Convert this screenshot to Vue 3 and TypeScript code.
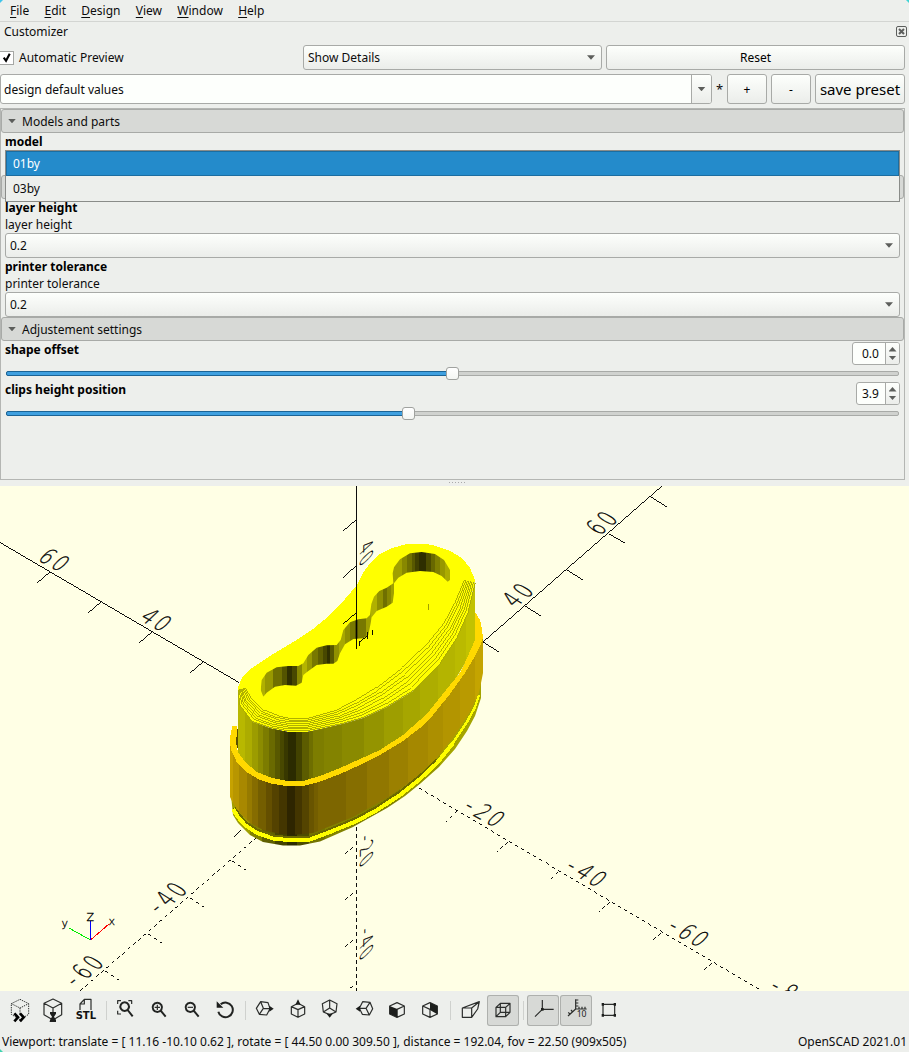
<script setup lang="ts">
import { ref } from 'vue'

interface Icon {
  cx: number
  line?: string
  fill?: string
  heavy?: string
  dashed?: boolean
  label?: { x: number; y: number; size: number; bold: boolean; text: string }
  pressed?: boolean
}

const menus = ['File', 'Edit', 'Design', 'View', 'Window', 'Help']
const options = ['01by', '03by']
const selected = ref('01by')

const sliders = [
  { name: 'shape offset', value: '0.0', percent: 50, wide: true },
  { name: 'clips height position', value: '3.9', percent: 45.1, wide: false },
]

const groups: Icon[][] = [
  [
    { cx: 60, dashed: true, line: 'M60 28L86 41V73L60 89L34 73V41ZM34 41L60 54L86 41M60 54V72', heavy: 'M43 70L54 82L43 94M60 70L71 82L60 94' },
    { cx: 159, line: 'M159 27L185 40V74L159 90L132 74V40ZM132 40L159 54L185 40M159 54V68M149 94H168', fill: 'M150 66H168V71L162 80L168 90V95H150V90L156 80L150 71Z' },
    { cx: 259, line: 'M241 60V42L254 28H274V60M254 28V42H241', label: { x: 228, y: 88, size: 30, bold: true, text: 'STL' } },
  ],
  [
    { cx: 378, line: 'M353 42V32H363M385 32H395V42M353 62V72H363', heavy: 'M374 37A13 13 0 1 1 373.9 37M383 60L398 79' },
    { cx: 477, line: 'M464 52H480M472 44V60', heavy: 'M472 38A14 14 0 1 1 471.9 38M482 62L497 80' },
    { cx: 576, line: 'M563 52H579', heavy: 'M571 38A14 14 0 1 1 570.9 38M581 62L596 80' },
    { cx: 674, heavy: 'M661 43A22 22 0 1 1 654 65', fill: 'M649 34V53H669Z' },
  ],
  [
    { cx: 795, line: 'M782 35L804 38L810 56L800 75L778 73L769 55ZM782 35L790 55L810 56M790 55L778 73', fill: 'M808 47L821 56L808 65Z' },
    { cx: 894, line: 'M894 40L914 50V72L894 82L874 72V50ZM874 50L894 59L914 50M894 59V82', fill: 'M894 28L902 44H886Z' },
    { cx: 992, line: 'M988 30L1010 41L1007 66L988 74L969 66L966 41ZM988 30V54L969 66M988 54L1007 66', fill: 'M988 83L979 71H997Z' },
    { cx: 1092, line: 'M1110 37L1118 56L1108 75L1087 73L1078 55L1088 35ZM1110 37L1098 55L1078 55M1098 55L1108 75', fill: 'M1067 56L1080 47V65Z' },
    { cx: 1191, line: 'M1191 38L1213 48V72L1191 82L1169 72V48ZM1191 58L1213 48M1191 58V82', fill: 'M1169 48L1192 57V82L1169 72Z' },
    { cx: 1290, line: 'M1290 38L1312 48V72L1290 82L1268 72V48ZM1268 48L1290 58V82', fill: 'M1290 38L1312 48V73L1290 60Z' },
  ],
  [
    { cx: 1410, line: 'M1387 54H1415V82H1387ZM1387 54L1438 35L1415 54M1438 35L1433 57L1415 82' },
    { cx: 1509, pressed: true, line: 'M1488 52H1517V80H1488ZM1501 40H1530V67H1501ZM1488 52L1501 40M1517 52L1530 40M1488 80L1501 67M1517 80L1530 67' },
  ],
  [
    { cx: 1629, pressed: true, line: 'M1627 30V58H1661M1627 58L1605 80', fill: 'M1623 54H1631V62H1623Z' },
    { cx: 1728, pressed: true, line: 'M1727 28V57H1760M1727 30H1735M1727 39H1735M1727 48H1735M1737 50V57M1746 50V57M1755 50V57M1727 57L1704 78M1713 60L1718 66M1705 67L1711 74', label: { x: 1730, y: 82, size: 26, bold: false, text: '10' } },
    { cx: 1827, line: 'M1809 43H1844V76H1809Z', fill: 'M1805 39H1812V47H1805ZM1841 39H1848V47H1841ZM1805 72H1812V80H1805ZM1841 72H1848V80H1841Z' },
  ],
]

type Band = [number, number, string]
const bodyBands: Band[] = [
  [238, 245, '#b8b800'], [245, 252, '#acac00'], [252, 258, '#9c9c00'], [258, 263, '#8c8c00'], [263, 269, '#7c7c00'],
  [269, 275, '#6a6a00'], [275, 280, '#585800'], [280, 284, '#484800'], [284, 288, '#383800'], [288, 296, '#2b2b00'],
  [296, 302, '#424200'], [302, 309, '#5c5c00'], [309, 313, '#6e6e00'], [313, 324, '#7d7d00'], [324, 342, '#838300'],
  [342, 364, '#8a8a00'], [364, 384, '#949400'], [384, 403, '#9e9e00'], [403, 420, '#a6a600'], [420, 438, '#adad00'],
  [438, 455, '#b4b400'], [455, 466, '#baba00'], [466, 476, '#c2c200'],
]
const ringBands: Band[] = [
  [230, 233, '#c6a200'], [233, 239, '#b89600'], [239, 247, '#a88800'], [247, 252, '#967a00'], [252, 258, '#866c00'],
  [258, 266, '#745e00'], [266, 272, '#644f00'], [272, 279, '#544200'], [279, 287, '#443600'], [287, 295, '#2e2500'],
  [295, 302, '#433500'], [302, 309, '#544400'], [309, 314, '#685400'], [314, 318, '#745e00'], [318, 346, '#7d6600'],
  [346, 367, '#866e00'], [367, 389, '#917700'], [389, 408, '#9b8000'], [408, 428, '#a58800'], [428, 443, '#ac8f00'],
  [443, 460, '#b39500'], [460, 475, '#b99a00'], [475, 483, '#c4a400'],
]
const baseBands: Band[] = [
  [230, 250, '#a0a000'], [250, 262, '#808000'], [262, 275, '#606000'], [275, 287, '#444400'], [287, 297, '#2c2c00'],
  [297, 309, '#4c4c00'], [309, 325, '#747400'], [325, 400, '#828200'], [400, 440, '#949400'], [440, 483, '#a4a400'],
]
const holeBands: Band[] = [
  [120, 135, '#b0b000'], [135, 160, '#989800'], [160, 185, '#707000'], [185, 200, '#545400'], [200, 215, '#303000'],
  [215, 232, '#484800'], [232, 245, '#888800'], [245, 262, '#b4b400'], [262, 275, '#989800'], [275, 295, '#787800'],
  [295, 310, '#606000'], [310, 320, '#484800'], [320, 330, '#303000'], [330, 342, '#585800'], [342, 357, '#909000'],
  [357, 375, '#a8a800'], [375, 390, '#909000'], [390, 405, '#787800'], [405, 415, '#505000'], [415, 438, '#787800'],
  [438, 452, '#a0a000'], [452, 470, '#b0b000'], [470, 490, '#909000'], [490, 502, '#707000'], [502, 512, '#888800'],
  [512, 545, '#a0a000'], [545, 560, '#888800'], [560, 575, '#707000'], [575, 585, '#585800'], [585, 597, '#404000'],
  [597, 618, '#2e2e00'], [618, 632, '#4c4c00'], [632, 645, '#686800'], [645, 660, '#808000'], [660, 675, '#989800'],
  [675, 692, '#acac00'],
]

// Rounded rim: outer and inner edge points, stepped into layer lines.
const rim: [number, number, number, number][] = [
  [238, 690, 246, 688], [240, 705, 253, 698], [253, 722, 265, 709], [270, 728, 280, 715], [287, 731, 290, 717],
  [308, 731, 308, 717], [342, 724, 335, 709], [363, 718, 353, 699], [387, 707, 375, 685], [413, 691, 400, 665],
  [440, 663, 425, 642], [457, 637, 442, 622], [468, 612, 453, 602], [475, 583, 463, 580],
]
const layers = Array.from({ length: 8 }, (_, i) => {
  const t = i / 8
  return 'M' + rim.map(([ox, oy, ix, iy]) => `${(ox + (ix - ox) * t).toFixed(1)} ${(oy + (iy - oy) * t - 0.5).toFixed(1)}`).join('L')
})

const alongY = 'matrix(1.6 .88 -1.78 1.68 '
const alongX = 'matrix(1.38 -1.14 2.2 1.37 '
const alongZ = 'matrix(0 1.41 -1.74 1.6 '
const marks = [
  { at: alongY + '36.5 559.5)', text: '60' },
  { at: alongY + '138.5 619.5)', text: '40' },
  { at: alongY + '459 808)', text: '-20' },
  { at: alongY + '561 868)', text: '-40' },
  { at: alongY + '663 928)', text: '-60' },
  { at: alongY + '765 988)', text: '-80' },
  { at: alongX + '515.5 608)', text: '40' },
  { at: alongX + '599.5 536)', text: '60' },
  { at: alongX + '158 916)', text: '-40' },
  { at: alongX + '74.5 989)', text: '-60' },
  { at: alongZ + '360 548)', text: '40' },
  { at: alongZ + '360 838)', text: '-20' },
  { at: alongZ + '360 931)', text: '-40' },
]
const spread = (t: string) => (t.length === 3 ? '1.5 7.95 15.9' : '0 7.95')
</script>

<template>
  <div class="window">
    <i class="corner tl"></i><i class="corner tr"></i><i class="corner bl"></i>
    <nav class="menubar">
      <span v-for="m in menus" :key="m" class="menu"><u>{{ m[0] }}</u>{{ m.slice(1) }}</span>
    </nav>

    <div class="dock-title">
      <span>Customizer</span>
      <svg class="close" viewBox="0 0 11 11"><rect x=".5" y=".5" width="10" height="10" rx="1.5" /><path d="M3 3L8 8M8 3L3 8" /></svg>
    </div>

    <div class="row first">
      <label class="check"><span class="box"><svg viewBox="0 0 13 13"><path d="M3.5 6L6 9.5L10 2" /></svg></span>Automatic Preview</label>
      <div class="combo details">Show Details<b class="down"></b></div>
      <button class="btn reset">Reset</button>
    </div>

    <div class="row second">
      <div class="edit"><span>design default values</span><em><b class="down"></b></em></div>
      <span class="star">*</span>
      <button class="btn sq">+</button>
      <button class="btn sq">-</button>
      <button class="btn save">save preset</button>
    </div>

    <section class="panel">
      <div class="head"><b class="down"></b>Models and parts</div>
      <div class="name">model</div>
      <div class="anchor">
        <div class="combo"></div>
        <ul class="popup">
          <li v-for="o in options" :key="o" :class="{ on: o === selected }" @click="selected = o">{{ o }}</li>
        </ul>
      </div>
      <div class="head"></div>
      <div class="name">layer height</div>
      <div class="desc">layer height</div>
      <div class="combo field">0.2<b class="down"></b></div>
      <div class="name">printer tolerance</div>
      <div class="desc">printer tolerance</div>
      <div class="combo field">0.2<b class="down"></b></div>
      <div class="head"><b class="down"></b>Adjustement settings</div>
      <div v-for="s in sliders" :key="s.name" class="param">
        <div class="param-top">
          <span class="name">{{ s.name }}</span>
          <span class="spin" :class="{ wide: s.wide }"><span>{{ s.value }}</span><em><b class="up"></b><b class="down"></b></em></span>
        </div>
        <div class="groove"><div class="level" :style="{ width: s.percent + '%' }"></div><div class="knob"></div></div>
      </div>
    </section>
    <div class="grip"><i v-for="n in 6" :key="n"></i></div>

    <svg class="scene" viewBox="0 486 909 505" shape-rendering="crispEdges">
      <defs>
        <clipPath id="body"><path d="M238 687L240 705L253 722L270 728L287 731.5H308L342 724L363 718L387 707L413 691L440 663L457 637L468 612L475 580V645L467 660L455 680L438 703L420 724L403 738L380 753L340 771L303 784H287L257 775L245 765L238 753Z" /></clipPath>
        <clipPath id="ring"><path d="M230 735V797L233 803L238 811L250 823L263 830L280 834L293 835L313 833L353 817L387 798L413 780L437 758L453 738L470 712L479 693L483 673V635L475 650L450 690L420 725L380 752L320 778L303 782H287L250 772L236 755Z" /></clipPath>
        <clipPath id="base"><path d="M231 795L233 815L238 823L250 835L263 842L283 845.5H300L320 841.5L353 827L387 808L405 796L421 783L439 767L455 749L467 731L475 716L481 698V680L300 780Z" /></clipPath>
        <clipPath id="hole"><path d="M690 150V120L672 90L645 72L605 66L570 70L540 88L522 112L518 130L520 160L500 173L478 183L462 200L454 222L450 255L440 265L415 268L390 277L370 300L362 330L350 345L320 346L290 353L265 375L250 400L235 408H205L170 412L140 428L125 450L122 480L130 500L140 488L165 470L195 465L228 467L245 458L250 435L262 425L290 405L320 401H340L352 393L360 370L375 343L400 327L430 325L445 315L452 280L455 262L470 243L500 230L518 218L522 190V160L535 143L560 128L600 123L640 126L665 138L683 155Z" /></clipPath>
      </defs>
      <rect y="486" width="909" height="505" fill="#ffffe5" />
      <g class="ink">
        <path d="M0 542.5L239 682.5M50 572L37 583M101 602L88 613M152 632L139 643M203 662L190 673" />
        <path d="M483 642L662 486M483 642L499 652M525 606L541 616M567 570L583 580M609 534L625 543M651 497L667 507" />
        <path d="M356 520L343 531M356 566L343 577.5M241 830L234 837" />
        <path class="dash" d="M257 837L80 991M419 788L762 991M356.5 827V991" />
        <path class="dash" d="M232 861L246 870M190 898L204 907M148 934L162 943M105 971L119 980M457 811L446 822M508 842L497 852M558 872L548 882M610 902L599 912M661 933L650 942M712 963L701 972M353 847L344 855M353 893L344 901M353 940L344 947.5M353 986L349 989" />
      </g>
      <g class="marks">
        <text v-for="m in marks" :key="m.at" :transform="m.at" :x="spread(m.text)">{{ m.text }}</text>
      </g>

      <g clip-path="url(#base)"><rect v-for="b in baseBands" :key="b[0]" :x="b[0]" y="670" :width="b[1] - b[0]" height="180" :fill="b[2]" /></g>
      <g clip-path="url(#ring)"><rect v-for="b in ringBands" :key="b[0]" :x="b[0]" y="620" :width="b[1] - b[0]" height="230" :fill="b[2]" /></g>
      <path class="lip" d="M234 808L245 822L257 830L273 836L293 838L310 837L330 829.5L357 818L377 807L400 792L420 776L437 760" />
      <path class="glow" d="M233 809L238 817L245 825L257 833L273 838.5L293 840.5L310 839.5L330 832L357 821L377 810L400 795L420 779L437 763L453 743" />
      <path class="glow thin" d="M452 744L467 722L475 707L479 695" />
      <path d="M238 727L236 737V745L240 754L246 763V727Z" fill="#5a5000" />
      <g clip-path="url(#body)"><rect v-for="b in bodyBands" :key="b[0]" :x="b[0]" y="570" :width="b[1] - b[0]" height="230" :fill="b[2]" /></g>
      <path fill="#ffd900" d="M232.5 726L230 737L230.7 749L236.7 762L246.7 772L258 779L271.7 783.7L286.7 786H303L320 781.7L340 774L360 765L380 755L403 741L420 728L433 715L450 694L465 673L475 656L481 644L483 638L482 629L480 620L475 612V640L467 658L460.7 672L450 685L438 700L430 710L420 720L403 735L380 750L360 759L340 768L320 776L303 781H287L272 778L257 772L245 762L238 752L236 743L237 731V726Z" />
      <path fill="#ffff00" d="M238 687L243 676L252 668L270 656L298 639L313 629L330 615L345 599L357 585L363 573L370 563L380 554L392 548L407 544L420 543.5L433 545L450 551L462 558L470 568L475 580L468 612L457 637L440 663L413 691L387 707L363 718L342 724L308 731.5H287L270 728L253 722L240 705Z" />
      <path v-for="(d, i) in layers" :key="i" :d="d" class="layer" />
      <g transform="translate(220 530) scale(.33333)"><g clip-path="url(#hole)"><rect v-for="b in holeBands" :key="b[0]" :x="b[0]" y="50" :width="b[1] - b[0]" height="460" :fill="b[2]" /></g></g>
      <path d="M428.5 604V610" stroke="#a0a000" />
      <path class="ink" d="M356.5 486V649M356 613L343 624M359.5 646V641L367.5 635V632M367.5 635V639M372.5 630V635" />
      <g fill="none">
        <path d="M90.5 940L109 924" stroke="#f00" /><path d="M90.5 940L69 928" stroke="#0e0" /><path d="M90.5 940V921" stroke="#00f" />
      </g>
      <g class="axis"><text x="108.5" y="925">x</text><text x="61.5" y="927">y</text><text x="86.4" y="921">Z</text></g>
    </svg>

    <div class="toolbar">
      <div v-for="(g, i) in groups" :key="i" class="group">
        <div v-for="ic in g" :key="ic.cx" class="tool" :class="{ pressed: ic.pressed }">
          <svg :viewBox="`${ic.cx - 48} 15 96 93`">
            <path v-if="ic.line" :d="ic.line" class="line" :class="{ dotted: ic.dashed }" />
            <path v-if="ic.fill" :d="ic.fill" class="fill" />
            <path v-if="ic.heavy" :d="ic.heavy" class="heavy" :class="{ extra: ic.dashed }" />
            <text v-if="ic.label" :x="ic.label.x" :y="ic.label.y" :font-size="ic.label.size" :class="{ strong: ic.label.bold }">{{ ic.label.text }}</text>
          </svg>
        </div>
      </div>
    </div>
    <footer class="status">
      <span>Viewport: translate = [ 11.16 -10.10 0.62 ], rotate = [ 44.50 0.00 309.50 ], distance = 192.04, fov = 22.50 (909x505)</span>
      <span>OpenSCAD 2021.01</span>
    </footer>
  </div>
</template>

<style>
body { margin: 0; background: #edefec; }
</style>

<style scoped>
* { box-sizing: border-box; }
.window { position: relative; width: 909px; height: 1052px; overflow: hidden; display: flex; flex-direction: column; background: #edefec; color: #0c0c0c; font: 12px/17px "Noto Sans", sans-serif; }
.corner { position: absolute; width: 3px; height: 3px; background: #3fc4ea; }
.tl { left: 0; top: 0; clip-path: polygon(0 0, 100% 0, 0 100%); }
.tr { right: 0; top: 0; background: #3fd4d4; clip-path: polygon(0 0, 100% 0, 100% 100%); }
.bl { left: 0; bottom: 0; background: #3fd4b0; clip-path: polygon(0 0, 100% 100%, 0 100%); }
.menubar { height: 22px; flex: none; display: flex; gap: 15.3px; padding: 2px 10px 0; border-bottom: 1px solid #d3d5d2; }
.menu u { text-underline-offset: 2px; text-decoration-thickness: 1px; }
.dock-title { height: 23px; flex: none; display: flex; justify-content: space-between; padding: 1px 2px 0 4px; }
.close { width: 11px; height: 11px; margin-top: 3px; fill: none; stroke: #5c5e5c; }
.close path { stroke-width: 2; }
.row { display: flex; flex: none; }
.first { height: 25px; padding-right: 4px; }
.check { width: 303px; display: flex; align-items: center; gap: 5px; }
.box { width: 14px; height: 14px; border: 1px solid #a5a7a4; border-left: 0; background: #fff; display: flex; }
.box svg { width: 13px; height: 12px; fill: none; stroke: #000; stroke-width: 2.3; }
.combo, .btn, .spin { border: 1px solid #a8aaa7; border-radius: 3px; background: linear-gradient(#fdfffc, #ebedea); }
.combo { height: 25px; padding: 0 6px 0 4px; display: flex; align-items: center; justify-content: space-between; }
.btn { font: inherit; color: #000; padding: 0; margin-left: 4px; text-align: center; }
.details { width: 299px; }
.reset { width: 299px; }
.down, .up { display: block; flex: none; width: 8px; height: 4.5px; background: #5c5e5b; clip-path: polygon(0 0, 100% 0, 50% 100%); }
.up { clip-path: polygon(50% 0, 100% 100%, 0 100%); }
.second { height: 30px; margin-top: 4px; }
.edit { width: 712px; display: flex; border: 1px solid #a8aaa7; border-radius: 3px; background: #fdfffc; justify-content: space-between; align-items: center; padding-left: 3px; }
.edit em { width: 20px; height: 28px; border-left: 1px solid #a8aaa7; background: linear-gradient(#fdfffc, #ebedea); display: grid; place-items: center; border-radius: 0 2px 2px 0; }
.star { width: 11px; padding-left: 4px; line-height: 30px; font-size: 13px; }
.sq { width: 40px; }
.row .sq:first-of-type { margin-left: 4px; }
.save { width: 90px; font-size: 15px; }
.panel { width: 905px; height: 372px; margin-top: 4px; border: 1px solid #b4b6b3; flex: none; }
.head { height: 24px; border: 1px solid #a8aaa7; border-radius: 3px; background: #d7d9d6; display: flex; align-items: center; gap: 6px; padding-left: 6px; }
.name { font-weight: 700; height: 17px; padding-left: 4px; color: #000; }
.desc { height: 17px; padding-left: 4px; }
.anchor { position: relative; margin: 0 4px; height: 25px; }
.popup { position: absolute; z-index: 2; inset: 0 0 auto; height: 52px; margin: 0; padding: 0; list-style: none; border: 1px solid #8a8c89; background: #edefec; }
.popup li { height: 25px; line-height: 25px; padding-left: 7px; }
.popup .on { background: #248bcb; color: #fff; border: 1px solid #1c6da0; padding-left: 6px; line-height: 23px; }
.field { margin: 0 4px; }
.param { height: 40px; padding: 1px 4px 0; }
.param-top { display: flex; justify-content: space-between; height: 23px; }
.param .name { padding: 0; line-height: 15px; }
.spin { width: 44px; height: 23px; display: flex; justify-content: space-between; align-items: center; background: #fdfffc; padding-left: 5px; }
.wide { width: 48px; padding-left: 9px; }
.spin em { width: 14px; height: 21px; border-left: 1px solid #a8aaa7; background: linear-gradient(#fdfffc, #ebedea); display: flex; flex-direction: column; align-items: center; justify-content: center; gap: 4px; border-radius: 0 2px 2px 0; }
.groove { height: 5px; margin: 6px 1px 0; display: flex; align-items: center; background: #d0d2cf; border: 1px solid #a8aaa7; border-radius: 2px; }
.level { height: 5px; margin-left: -1px; background: #3fa0e0; border: 1px solid #1c6496; border-radius: 2px 0 0 2px; }
.knob { width: 13px; height: 13px; flex: none; margin-left: -6px; background: linear-gradient(#fff, #f4f6f3); border: 1px solid #a0a29f; border-radius: 3px; }
.grip { height: 6px; flex: none; display: flex; justify-content: center; gap: 2px; padding-top: 2px; margin-left: 4px; }
.grip i { width: 1px; height: 1px; background: #aaa; }
.scene { width: 909px; height: 505px; flex: none; display: block; }
.ink { fill: none; stroke: #000; stroke-width: .95; }
.dash { stroke-dasharray: 3.5 3.5; }
.marks text { font: 200 10px "DejaVu Sans", sans-serif; shape-rendering: auto; stroke: #000; stroke-width: .12; }
.axis text { font: 11px "DejaVu Sans", sans-serif; font-weight: 200; stroke: #000; stroke-width: .3; }
.lip { fill: none; stroke: #6c6800; stroke-width: 3; }
.glow { fill: none; stroke: #ff0; stroke-width: 4; }
.thin { stroke-width: 2.5; }
.layer { fill: none; stroke: #a8a800; stroke-width: .9; }
.toolbar { height: 40px; flex: none; display: flex; padding: 4px 0 0 4px; }
.group { display: flex; gap: 1px; height: 31px; }
.group + .group { padding-left: 3px; margin-left: 4px; border-left: 1px solid transparent; border-image: linear-gradient(transparent 20%, #cfd1ce 20%, #cfd1ce 80%, transparent 80%) 1; }
.tool { width: 32px; height: 31px; border-radius: 3px; }
.tool svg { display: block; width: 32px; height: 31px; }
.pressed { background: #d7d9d6; box-shadow: inset 0 0 0 1px #aeb0ad; }
.line { fill: none; stroke: #2c2e2c; stroke-width: 3.6; stroke-linejoin: round; }
.dotted { stroke-dasharray: 4 3; stroke-width: 3; }
.fill { fill: #1c1e1c; }
.heavy { fill: none; stroke: #222422; stroke-width: 6; }
.extra { stroke: #000; stroke-width: 8; }
.tool text { font-family: "Noto Sans", sans-serif; fill: #222; }
.tool .strong { font-family: "DejaVu Sans", sans-serif; font-weight: 700; fill: #111; }
.status { flex: 1; display: flex; justify-content: space-between; padding: 2px 2px 0; white-space: nowrap; }
</style>
